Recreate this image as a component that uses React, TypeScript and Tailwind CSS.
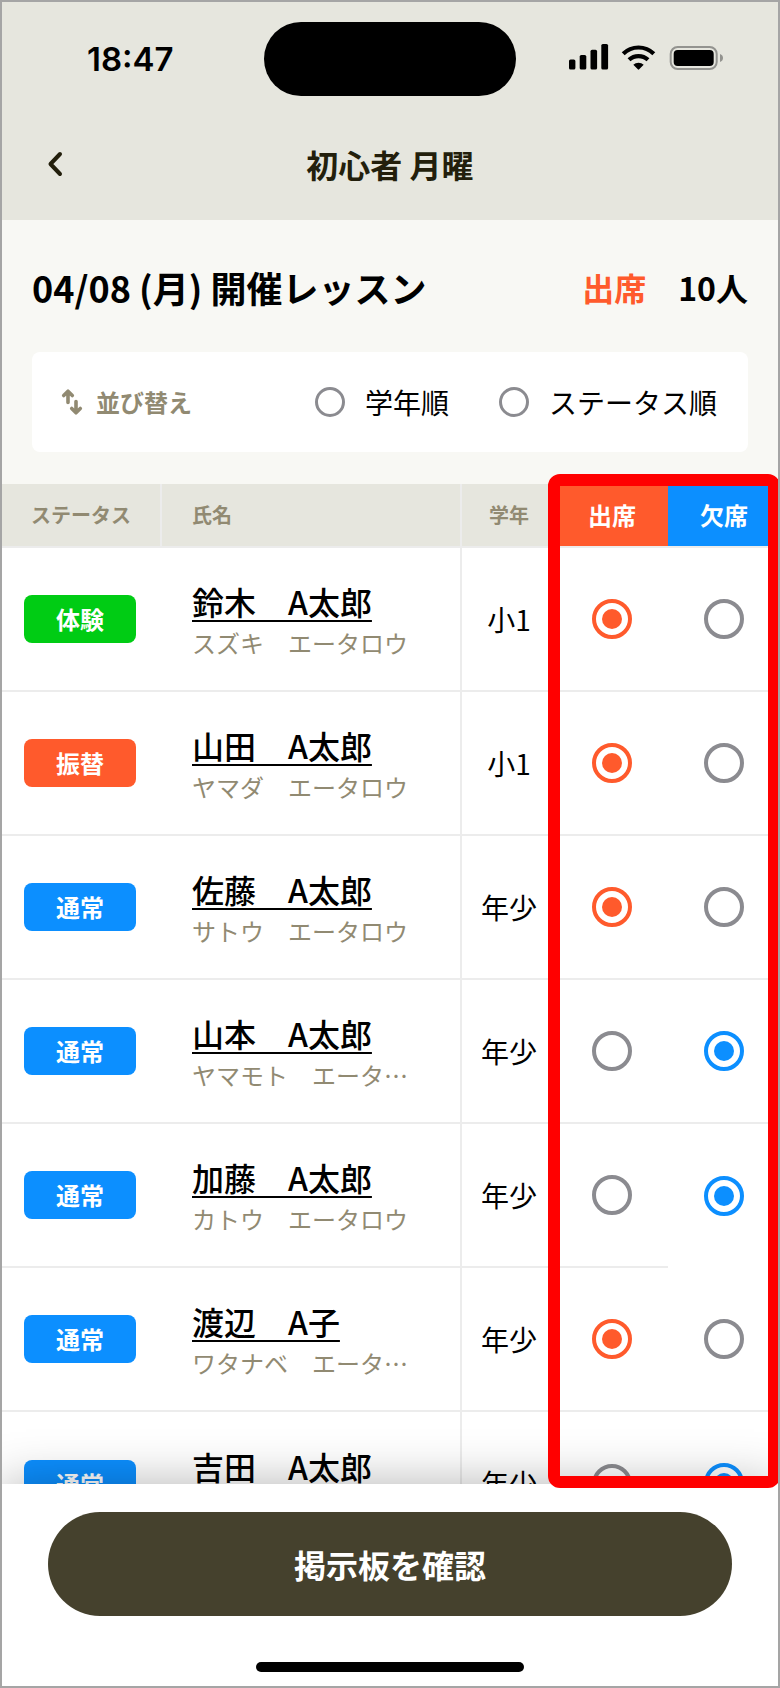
import React from "react";

type Status = "体験" | "振替" | "通常";
type Answer = "present" | "absent";

interface Student {
  status: Status;
  name: string;
  kana: string;
  grade: string;
  answer: Answer;
  leadBorder?: boolean;
  lastBorder?: boolean;
}

const students: Student[] = [
  { status: "体験", name: "鈴木　A太郎", kana: "スズキ　エータロウ", grade: "小1", answer: "present" },
  { status: "振替", name: "山田　A太郎", kana: "ヤマダ　エータロウ", grade: "小1", answer: "present" },
  { status: "通常", name: "佐藤　A太郎", kana: "サトウ　エータロウ", grade: "年少", answer: "present" },
  { status: "通常", name: "山本　A太郎", kana: "ヤマモト　エータ…", grade: "年少", answer: "absent" },
  { status: "通常", name: "加藤　A太郎", kana: "カトウ　エータロウ", grade: "年少", answer: "absent", lastBorder: false },
  { status: "通常", name: "渡辺　A子", kana: "ワタナベ　エータ…", grade: "年少", answer: "present" },
  { status: "通常", name: "吉田　A太郎", kana: "ヨシダ　エータロウ", grade: "年少", answer: "absent", leadBorder: false },
];

const statusColor: Record<Status, string> = {
  体験: "bg-[#00cc14]",
  振替: "bg-[#ff5a2c]",
  通常: "bg-[#0c8fff]",
};

const columns = "grid grid-cols-[160px_300px_94px_112px_112px]";

function StatusBar() {
  return (
    <div className="grid h-[112px] shrink-0 grid-cols-[262px_252px_262px] pt-5">
      <div className="flex h-[74px] items-center pl-[85px] font-['Inter'] text-[33px] font-semibold leading-none text-black">
        18:47
      </div>
      <div className="h-[74px] rounded-full bg-black" />
      <div className="pl-[53px] pt-[22px]">
        <svg width="156" height="28" viewBox="0 0 156 28" fill="none">
          <rect x="0" y="15.5" width="6.4" height="10" rx="1.6" fill="#000" />
          <rect x="10.7" y="11" width="6.6" height="14.5" rx="1.6" fill="#000" />
          <rect x="21.5" y="5.8" width="6.6" height="19.7" rx="1.6" fill="#000" />
          <rect x="32.3" y="0" width="6.8" height="25.5" rx="1.6" fill="#000" />
          <path d="M54.2 9.7a22 22 0 0 1 30.6 0" stroke="#000" strokeWidth="4.2" />
          <path d="M60 15.8a14 14 0 0 1 19 0" stroke="#000" strokeWidth="4.2" />
          <path d="M64.3 20.7a7.8 7.8 0 0 1 10.4 0l-4.5 4.6a1 1 0 0 1-1.4 0z" fill="#000" />
          <rect x="101.7" y="3" width="46" height="22" rx="7" stroke="#93938f" strokeWidth="2" />
          <rect x="104.7" y="6" width="40" height="16" rx="4" fill="#000" />
          <path d="M151 10c2 .7 3 2.200 3 4s-1 3.300-3 4z" fill="#93938f" />
        </svg>
      </div>
    </div>
  );
}

function NavBar() {
  return (
    <div className="grid h-[106px] shrink-0 grid-cols-[100px_576px_100px] items-start">
      <svg className="ml-[42px] mt-[36px]" width="24" height="28" viewBox="0 0 24 28" fill="none">
        <path d="M16 4 6.500 14 16 24" stroke="#231f0c" strokeWidth="4" strokeLinecap="round" strokeLinejoin="round" />
      </svg>
      <h1 className="mt-[26px] text-center text-[32px] font-bold leading-[48px] text-[#231f0c]">初心者 月曜</h1>
    </div>
  );
}

function SortOption({ label }: { label: string }) {
  return (
    <label className="flex items-center gap-5">
      <span className="size-[30px] rounded-full border-3 border-[#8b8b90]" />
      <span className="text-[28px] leading-10">{label}</span>
    </label>
  );
}

function Summary() {
  return (
    <section className="h-[264px] shrink-0 bg-[#f8f8f4] px-[30px] pt-10">
      <div className="flex h-[54px] items-center justify-between font-bold">
        <h2 className="text-[36px] leading-none">04/08 (月) 開催レッスン</h2>
        <div className="flex gap-8 text-[32px] leading-none">
          <span className="text-[#ff5a2c]">出席</span>
          <span>10人</span>
        </div>
      </div>
      <div className="mt-[38px] flex h-[100px] items-center rounded-lg bg-white pl-7">
        <svg width="24" height="28" viewBox="0 0 24 28" fill="none" stroke="#918a72" strokeWidth="3.600" strokeLinecap="round" strokeLinejoin="round">
          <path d="M8 14.500V3.500M3.700 7.500 8 3.200l4.300 4.300M16 13.500v11M11.700 20.500 16 24.800l4.300-4.300" />
        </svg>
        <span className="ml-3 text-2xl font-bold text-[#918a72]">並び替え</span>
        <div className="ml-[123px] flex gap-[50px]">
          <SortOption label="学年順" />
          <SortOption label="ステータス順" />
        </div>
      </div>
    </section>
  );
}

function Radio({ checked, tone }: { checked: boolean; tone: Answer }) {
  const ring = checked
    ? tone === "present"
      ? "border-[#ff5a2c]"
      : "border-[#0c8fff]"
    : "border-[#8b8b90]";
  const dot = tone === "present" ? "bg-[#ff5a2c]" : "bg-[#0c8fff]";
  return (
    <span className={`flex size-10 items-center justify-center rounded-full border-4 ${ring}`}>
      {checked && <span className={`size-5 rounded-full ${dot}`} />}
    </span>
  );
}

function TableHeader() {
  return (
    <div className={`${columns} h-16 shrink-0 border-b-2 border-[#ececec] bg-[#e6e6de] text-xl font-bold text-[#918a72]`}>
      <div className="flex items-center justify-center border-r-2 border-[#ececec]">ステータス</div>
      <div className="flex items-center border-r-2 border-[#ececec] pl-[30px]">氏名</div>
      <div className="flex items-center justify-center">学年</div>
      <div className="flex items-center justify-center bg-[#ff5a2c] text-2xl text-white">出席</div>
      <div className="flex items-center justify-center bg-[#0c8fff] text-2xl text-white">欠席</div>
    </div>
  );
}

function Row({ student }: { student: Student }) {
  const { status, name, kana, grade, answer, leadBorder = true, lastBorder = true } = student;
  const line = "border-b-2 border-[#ececec]";
  const lead = leadBorder ? line : "";
  return (
    <div className={`${columns} h-36 shrink-0`}>
      <div className={`flex items-center pl-[22px] ${lead}`}>
        <span className={`flex h-12 w-28 items-center justify-center rounded-lg text-2xl font-bold text-white ${statusColor[status]}`}>
          {status}
        </span>
      </div>
      <div className={`flex flex-col justify-center border-r-2 border-[#ececec] pl-[30px] ${lead}`}>
        <a className="self-start text-[32px] font-medium leading-[48px] underline decoration-2 underline-offset-[5px]">{name}</a>
        <span className="text-2xl leading-9 text-[#918a72]">{kana}</span>
      </div>
      <div className={`flex items-center justify-center text-[28px] ${line}`}>{grade}</div>
      <div className={`flex items-center justify-center ${lead}`}>
        <Radio checked={answer === "present"} tone="present" />
      </div>
      <div className={`flex items-center justify-center ${lastBorder ? line : ""}`}>
        <Radio checked={answer === "absent"} tone="absent" />
      </div>
    </div>
  );
}

export default function App() {
  return (
    <div lang="ja" className="relative flex h-[1688px] w-[780px] flex-col overflow-hidden border-2 border-[#a5a5a5] bg-white font-['Noto_Sans_CJK_JP',sans-serif] text-black">
      <header className="shrink-0 bg-[#e6e6de]">
        <StatusBar />
        <NavBar />
      </header>
      <Summary />
      <main className="flex h-[1000px] shrink-0 flex-col overflow-hidden">
        <TableHeader />
        {students.map((s) => (
          <Row key={s.name} student={s} />
        ))}
      </main>
      <footer className="relative flex h-[202px] shrink-0 flex-col items-center bg-white pt-7 shadow-[0_0_48px_rgba(0,0,0,0.3)]">
        <button className="h-[104px] w-[684px] rounded-full bg-[#45412d] text-[32px] font-bold text-white">掲示板を確認</button>
        <div className="mt-[46px] h-[10px] w-[268px] rounded-full bg-black" />
      </footer>
      <div className="absolute left-[546px] top-[472px] h-[1014px] w-[232px] rounded-xl border-12 border-[#ff0000]" />
    </div>
  );
}
